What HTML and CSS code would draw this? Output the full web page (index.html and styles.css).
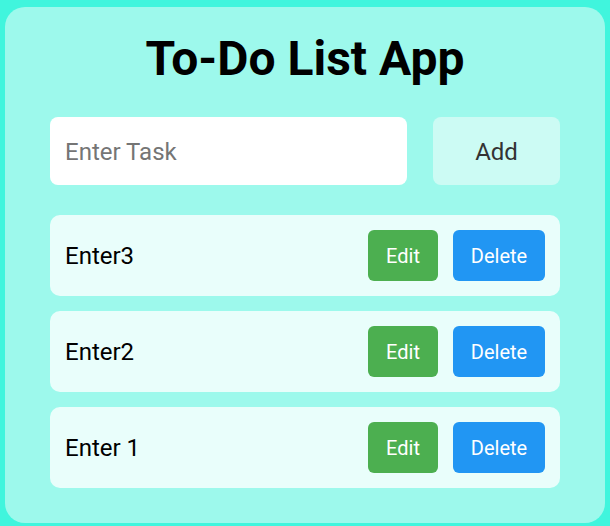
FILE: index.html
```html
<!DOCTYPE html>
<html>
<head>
<meta charset="utf-8">
<link rel="stylesheet" href="styles.css">
</head>
<body>
<div class="app">
  <h1 class="title">To-Do List App</h1>
  <div class="entry">
    <input class="task-input" type="text" placeholder="Enter Task">
    <button class="add-btn">Add</button>
  </div>
  <ul class="tasks">
    <li class="task">
      <span class="task-text">Enter3</span>
      <div class="actions">
        <button class="btn edit">Edit</button>
        <button class="btn delete">Delete</button>
      </div>
    </li>
    <li class="task">
      <span class="task-text">Enter2</span>
      <div class="actions">
        <button class="btn edit">Edit</button>
        <button class="btn delete">Delete</button>
      </div>
    </li>
    <li class="task">
      <span class="task-text">Enter 1</span>
      <div class="actions">
        <button class="btn edit">Edit</button>
        <button class="btn delete">Delete</button>
      </div>
    </li>
  </ul>
</div>
</body>
</html>
```

FILE: styles.css
```css
html, body {
  margin: 0;
  padding: 0;
}
body {
  background: #40f5dd;
  font-family: Roboto, "Liberation Sans", sans-serif;
  padding: 7px 5px 3px;
}
.app {
  background: #9df9ec;
  border-radius: 20px;
  padding: 24px 45px 35px;
}
.title {
  margin: 0 0 30px;
  font-size: 48px;
  font-weight: 700;
  text-align: center;
  color: #000;
  line-height: 56px;
}
.entry {
  display: flex;
  gap: 26px;
  margin-bottom: 30px;
}
.task-input {
  flex: 1;
  height: 68px;
  box-sizing: border-box;
  border: none;
  outline: none;
  border-radius: 8px;
  background: #fff;
  padding: 2px 15px 0;
  font-family: Roboto, sans-serif;
  font-size: 24px;
  color: #000;
}
.task-input::placeholder {
  color: #757575;
}
.add-btn {
  width: 127px;
  height: 68px;
  border: none;
  border-radius: 8px;
  background: #ccfbf4;
  color: #333;
  font-family: Roboto, sans-serif;
  font-size: 24px;
  padding: 2px 0 0;
}
.tasks {
  list-style: none;
  margin: 0;
  padding: 0;
  display: flex;
  flex-direction: column;
  gap: 15px;
}
.task {
  display: flex;
  align-items: center;
  justify-content: space-between;
  height: 81px;
  box-sizing: border-box;
  padding: 0 15px;
  background: #e9fefb;
  border-radius: 10px;
}
.task-text {
  font-size: 24px;
  color: #000;
}
.actions {
  display: flex;
  gap: 15px;
}
.btn {
  height: 51px;
  border: none;
  border-radius: 6px;
  padding: 0;
  color: #fff;
  font-family: Roboto, sans-serif;
  font-weight: 400;
  font-size: 20px;
}
.edit {
  width: 70px;
  background: #4caf50;
}
.delete {
  width: 92px;
  background: #2196f3;
}
```
